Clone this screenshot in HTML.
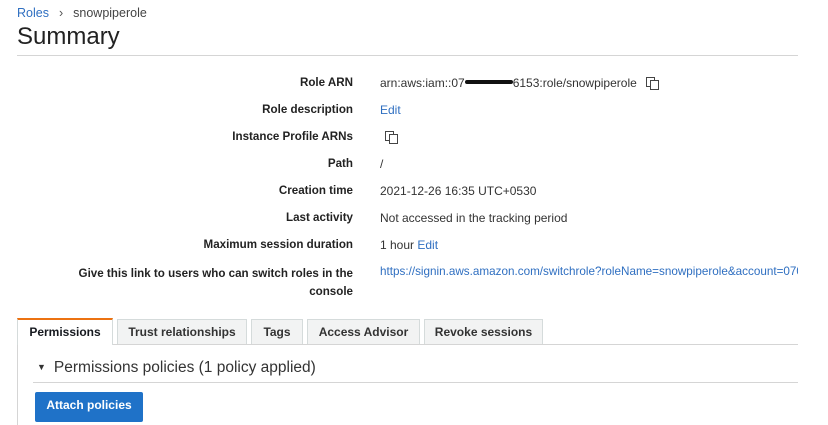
<!DOCTYPE html>
<html><head><style>
body{margin:0;width:828px;height:417px;overflow:hidden;background:#fff;font-family:"Liberation Sans",Arial,sans-serif;color:#16191f;position:relative}
.a{position:absolute;white-space:nowrap}
.lbl{position:absolute;right:475px;font-weight:bold;font-size:11.6px;text-align:right;color:#222}
.val{position:absolute;left:380px;font-size:12px;color:#333}
.lnk{color:#2f6fc1}
.tab{position:absolute;top:319px;height:25px;background:#f2f3f3;border:1px solid #d5dbdb;border-bottom:none;font-weight:bold;font-size:12px;line-height:25px;text-align:center;box-sizing:border-box;color:#333}
.cp{display:inline-block;width:12px;height:12px;position:relative;vertical-align:-2px}
.cp:before,.cp:after{content:"";position:absolute;width:7px;height:8px;border:1px solid #444;background:#fff}
.cp:before{left:0;top:0}.cp:after{left:4px;top:3px}
</style></head><body>
<div class="a" style="left:17px;top:6px;font-size:12.5px"><span class="lnk">Roles</span><span style="color:#555;margin:0 10px">›</span><span style="color:#444">snowpiperole</span></div>
<div class="a" style="left:17px;top:23px;font-size:24px;color:#222">Summary</div>
<div class="a" style="left:17px;top:55px;width:781px;border-top:1px solid #d5d5d5"></div>

<div class="lbl" style="top:76px">Role ARN</div>
<div class="val" style="top:76px">arn:aws:iam::07<span style="display:inline-block;width:48px;height:4px;background:#111;vertical-align:3px;border-radius:2px"></span>6153:role/snowpiperole <span class="cp" style="margin-left:6px"></span></div>
<div class="lbl" style="top:103px">Role description</div>
<div class="val lnk" style="top:103px">Edit</div>
<div class="lbl" style="top:130px">Instance Profile ARNs</div>
<div class="val" style="top:130px;left:385px"><span class="cp"></span></div>
<div class="lbl" style="top:157px">Path</div>
<div class="val" style="top:157px">/</div>
<div class="lbl" style="top:184px">Creation time</div>
<div class="val" style="top:184px">2021-12-26 16:35 UTC+0530</div>
<div class="lbl" style="top:211px">Last activity</div>
<div class="val" style="top:211px">Not accessed in the tracking period</div>
<div class="lbl" style="top:238px">Maximum session duration</div>
<div class="val" style="top:238px">1 hour <span class="lnk">Edit</span></div>
<div class="lbl" style="top:265px;line-height:18px">Give this link to users who can switch roles in the<br>console</div>
<div class="val lnk" style="top:265px;width:418px;overflow:hidden;white-space:nowrap;font-size:11.7px">https://signin.aws.amazon.com/switchrole?roleName=snowpiperole&amp;account=070</div>

<div class="tab" style="left:17px;width:96px;background:#fff;border-top:2px solid #ec7211;top:318px;height:27px;line-height:25px;color:#16191f">Permissions</div>
<div class="tab" style="left:117px;width:130px">Trust relationships</div>
<div class="tab" style="left:251px;width:52px">Tags</div>
<div class="tab" style="left:307px;width:113px">Access Advisor</div>
<div class="tab" style="left:424px;width:119px">Revoke sessions</div>
<div class="a" style="left:113px;top:344px;width:685px;border-top:1px solid #d5d5d5"></div>
<div class="a" style="left:17px;top:345px;height:80px;border-left:1px solid #d5d5d5"></div>
<div class="a" style="left:37px;top:359px;font-size:15.5px;color:#333"><span style="font-size:9px;vertical-align:2px;margin-right:8px">▼</span>Permissions policies (1 policy applied)</div>
<div class="a" style="left:33px;top:382px;width:765px;border-top:1px solid #d5d5d5"></div>
<div class="a" style="left:35px;top:392px;width:108px;height:30px;background:#1f72c8;border-radius:2px;color:#fff;font-weight:bold;font-size:12px;line-height:26px;text-align:center">Attach policies</div>
</body></html>
